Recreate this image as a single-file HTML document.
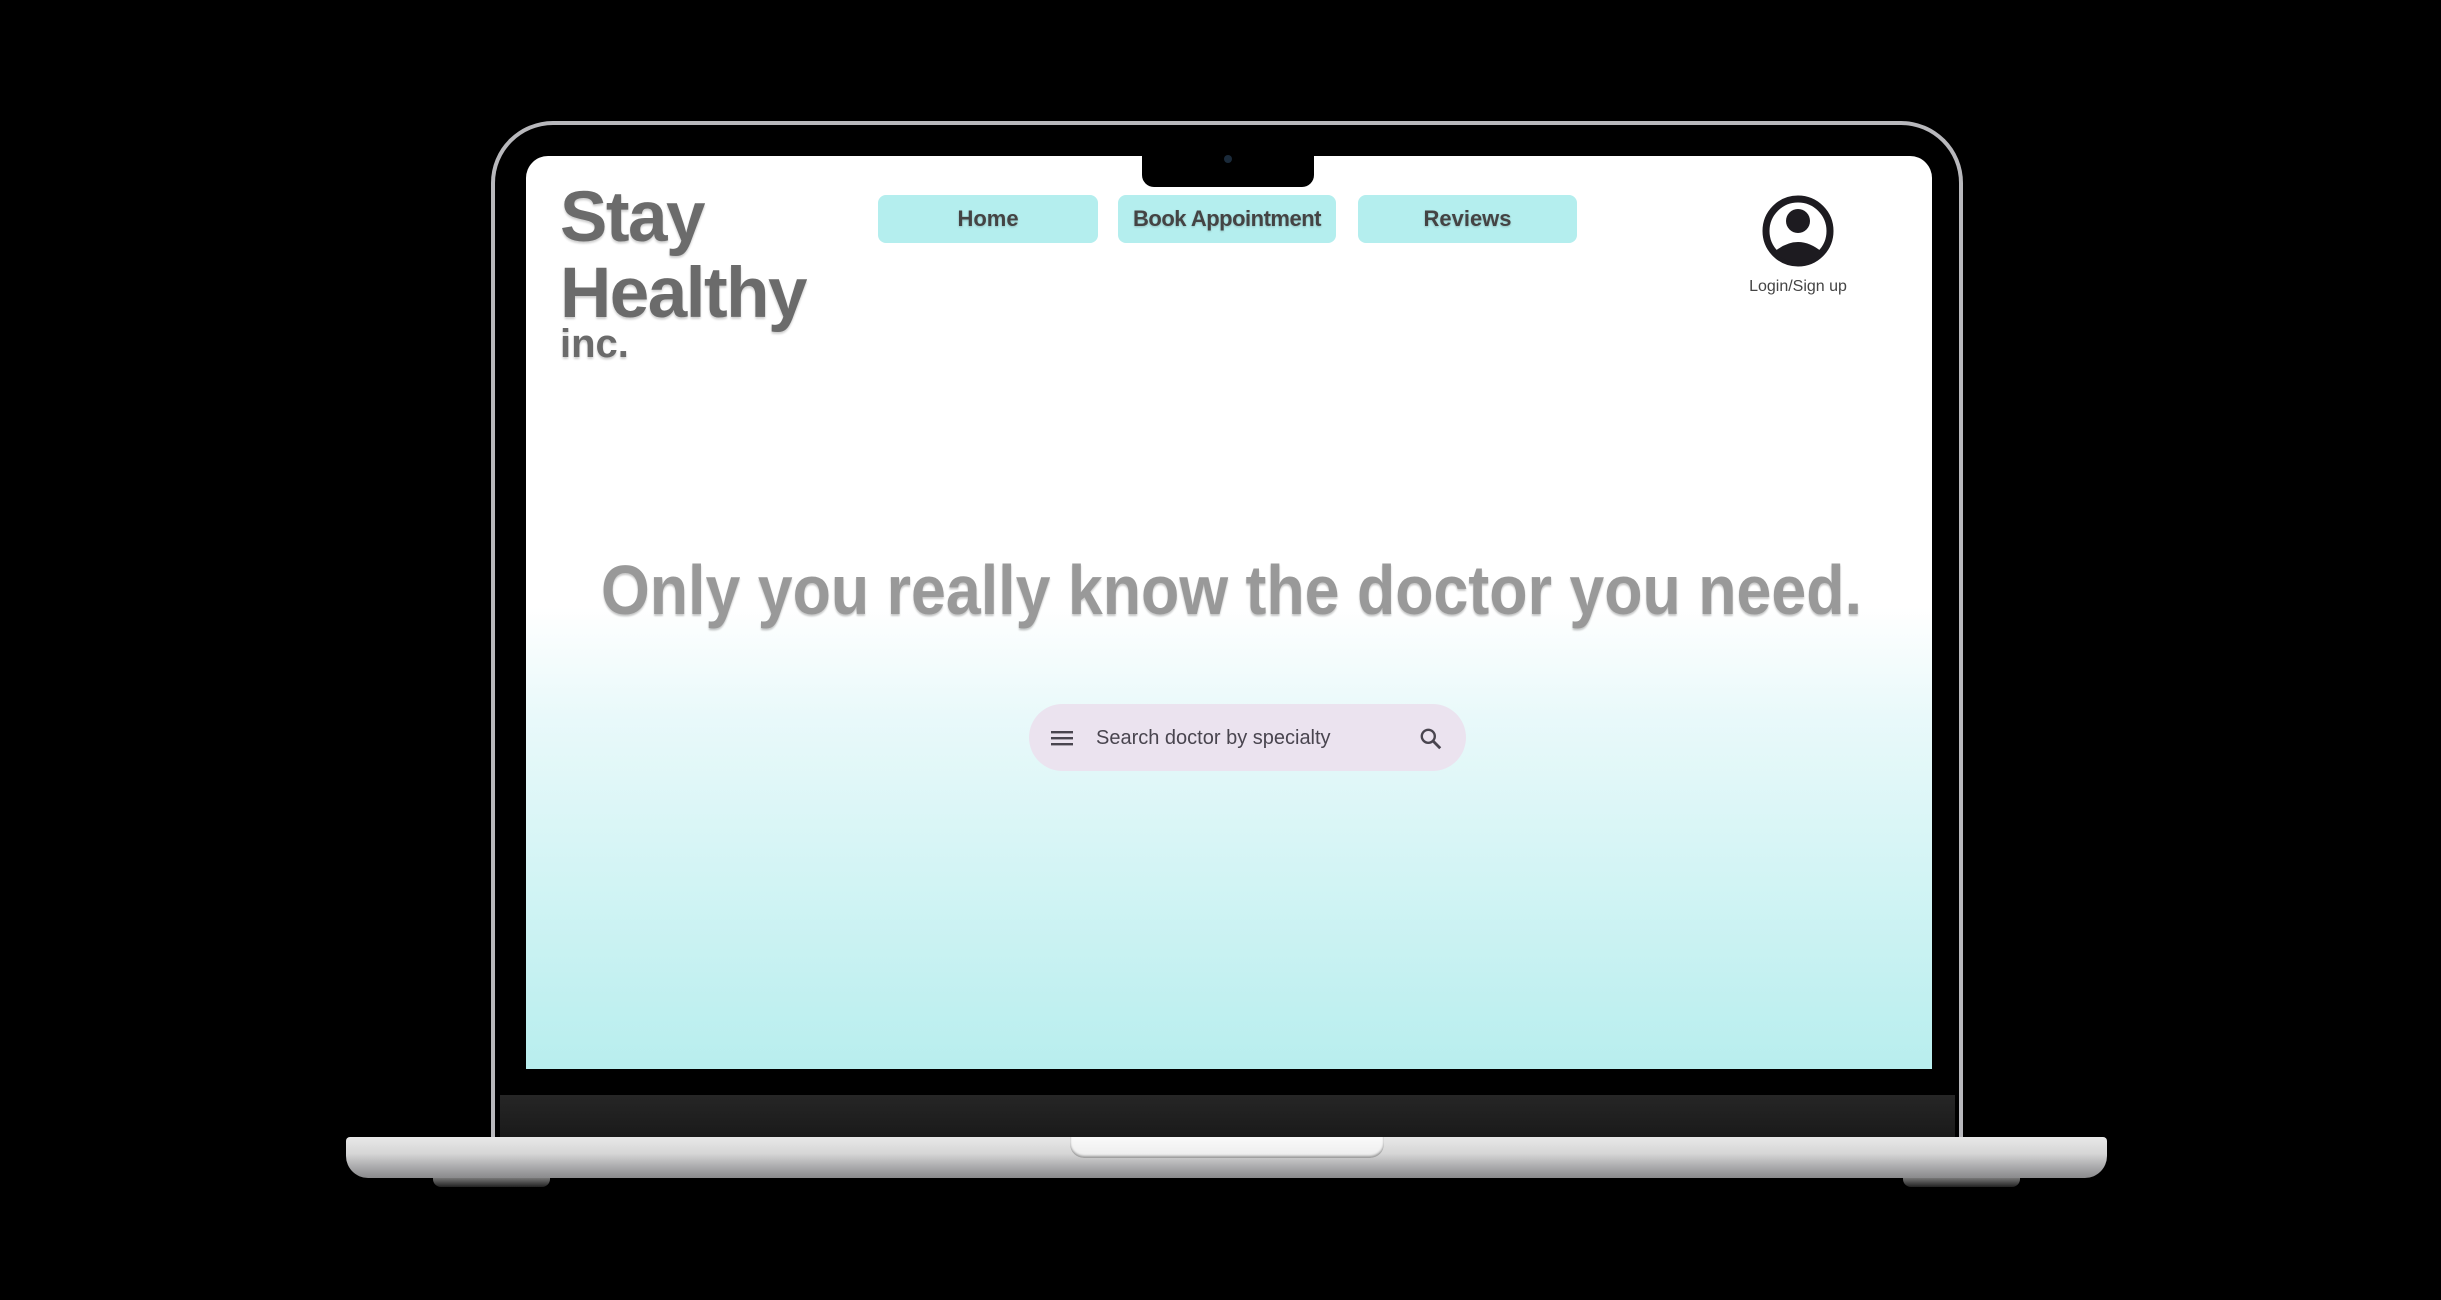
<!DOCTYPE html>
<html><head><meta charset="utf-8"><style>
*{margin:0;padding:0;box-sizing:border-box}
body{width:2441px;height:1300px;background:#000;position:relative;overflow:hidden;font-family:"Liberation Sans",sans-serif}
.abs{position:absolute}
.bezel{left:491px;top:121px;width:1472px;height:1020px;border:4px solid #b8b8bc;border-bottom:none;border-radius:62px 62px 0 0;background:#000}
.screen{left:526px;top:156px;width:1406px;height:913px;border-radius:22px 22px 0 0;background:linear-gradient(#fff 0,#fff 451px,#e9f9fa 560px,#b8eeee 913px);overflow:hidden}
.notch{left:1142px;top:150px;width:172px;height:37px;background:#000;border-radius:0 0 12px 12px}
.cam{left:1224px;top:155px;width:8px;height:8px;border-radius:50%;background:#1a2a3a}
.strip{left:500px;top:1095px;width:1455px;height:42px;background:linear-gradient(#262626,#1a1a1a)}
.base{left:346px;top:1137px;width:1761px;height:41px;border-radius:4px 4px 22px 22px;background:linear-gradient(#e8e8e8,#d6d6d6 40%,#a8a8aa 75%,#8a8a8c)}
.lip{left:1070px;top:1137px;width:314px;height:21px;background:linear-gradient(#fafafa,#ececec);border-radius:0 0 14px 14px;box-shadow:inset 0 -2px 2px #999}
.foot{top:1178px;width:117px;height:9px;background:linear-gradient(#777,#222);border-radius:0 0 8px 8px}
.logo{color:#6b6b6b;font-weight:bold;text-shadow:0 2px 2px rgba(0,0,0,.2)}
.btn{top:195px;height:48px;background:#b4eeee;border-radius:8px;color:#444;font-weight:bold;font-size:22px;text-align:center;line-height:48px;text-shadow:0 1px 2px rgba(0,0,0,.2)}
</style></head><body>
<div class="abs bezel"></div>
<div class="abs screen"></div>
<div class="abs notch"></div>
<div class="abs cam"></div>
<div class="abs strip"></div>
<div class="abs base"></div>
<div class="abs lip"></div>
<div class="abs foot" style="left:433px"></div>
<div class="abs foot" style="left:1903px"></div>

<div class="abs logo" style="left:560px;top:180px;font-size:71px;line-height:76px;letter-spacing:-1.5px">Stay<br>Healthy</div>
<div class="abs logo" style="left:560px;top:322px;font-size:40px;line-height:44px">inc.</div>

<div class="abs btn" style="left:878px;width:220px">Home</div>
<div class="abs btn" style="left:1118px;width:218px;letter-spacing:-0.5px">Book Appointment</div>
<div class="abs btn" style="left:1358px;width:219px">Reviews</div>

<svg class="abs" style="left:1762px;top:195px" width="72" height="72" viewBox="0 0 72 72">
<circle cx="36" cy="36" r="32" fill="none" stroke="#1d1b20" stroke-width="7"/>
<circle cx="36" cy="26" r="12" fill="#1d1b20"/>
<path d="M12 57 Q36 37 60 57 Q48 68 36 68 Q24 68 12 57Z" fill="#1d1b20"/>
</svg>
<div class="abs" style="left:1698px;top:278px;width:200px;text-align:center;font-size:16px;color:#444">Login/Sign up</div>

<svg class="abs" style="left:590px;top:540px" width="1290" height="100">
<text x="11" y="74" textLength="1261" lengthAdjust="spacingAndGlyphs" font-family="Liberation Sans, sans-serif" font-weight="bold" font-size="70" fill="#999" style="text-shadow:0 2px 2px rgba(0,0,0,.22)">Only you really know the doctor you need.</text>
</svg>

<div class="abs" style="left:1029px;top:704px;width:437px;height:67px;border-radius:34px;background:#ebe3ef"></div>
<svg class="abs" style="left:1051px;top:731px" width="22" height="15"><rect y="0" width="22" height="2.4" fill="#49454f"/><rect y="6" width="22" height="2.4" fill="#49454f"/><rect y="12" width="22" height="2.4" fill="#49454f"/></svg>
<div class="abs" style="left:1096px;top:726px;font-size:20px;line-height:24px;color:#49454f">Search doctor by specialty</div>
<svg class="abs" style="left:1418px;top:726px" width="26" height="26" viewBox="0 0 24 24"><circle cx="9.5" cy="9.5" r="6" fill="none" stroke="#49454f" stroke-width="2.2"/><path d="M14 14 L20.5 20.5" stroke="#49454f" stroke-width="2.6"/></svg>
</body></html>
